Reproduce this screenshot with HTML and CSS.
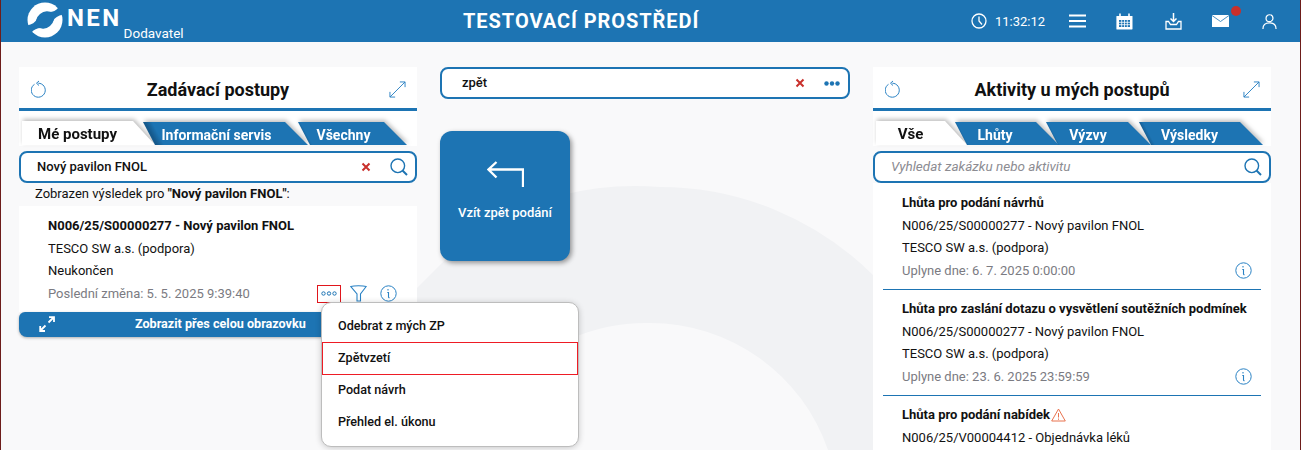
FILE: index.html
```html
<!DOCTYPE html>
<html lang="cs">
<head>
<meta charset="utf-8">
<title>NEN</title>
<link rel="stylesheet" href="styles.css">
</head>
<body>
<div class="app">
  <header class="topbar">
    <div class="brand">
      <svg class="logo" viewBox="0 0 36 36"><circle cx="18" cy="18" r="17.500" fill="#fff"/><ellipse cx="18" cy="18" rx="9.800" ry="7.800" transform="rotate(-40 18 18)" fill="#1d74b3"/><path d="M22 10 Q26.500 13 26 19 Q28.500 14 36 12.500 L31.500 5.500 Q28 10 22 10Z" fill="#1d74b3"/><path d="M22 10 Q26.500 13 26 19 Q28.500 14 36 12.500 L31.500 5.500 Q28 10 22 10Z" fill="#1d74b3" transform="rotate(180 18 18)"/></svg>
      <span class="nen">NEN</span>
      <span class="role">Dodavatel</span>
    </div>
    <h1 class="env">TESTOVACÍ PROSTŘEDÍ</h1>
    <div class="tools">
      <svg class="ico clock" viewBox="0 0 16 16"><circle cx="8" cy="8" r="7" fill="none" stroke="#fff" stroke-width="1.300"/><path d="M8 3.500V8l3 3.500" fill="none" stroke="#fff" stroke-width="1.300"/></svg>
      <span class="time">11:32:12</span>
      <svg class="ico burger" viewBox="0 0 17 14"><path d="M0 1.500h17M0 7h17M0 12.500h17" stroke="#fff" stroke-width="2.200"/></svg>
      <svg class="ico cal" viewBox="0 0 17 17"><path d="M1 3h15a.8.8 0 0 1 .5.5V16a.8.8 0 0 1-.5.6H1a.8.8 0 0 1-.6-.6V3.500A.8.8 0 0 1 1 3z" fill="#fff"/><path d="M4 0.500v3M13 0.500v3" stroke="#fff" stroke-width="1.600"/><path d="M3 7h11v7H3z" fill="#1d74b3"/><path d="M3 9.300h11M3 11.700h11M5.700 7v7M8.500 7v7M11.300 7v7" stroke="#fff" stroke-width=".8"/></svg>
      <svg class="ico dl" viewBox="0 0 17 17"><path d="M8.500 0v8M5.500 5.500l3 3 3-3" fill="none" stroke="#fff" stroke-width="1.500"/><path d="M3.500 8.500H1v7.500h15V8.500h-2.500l-2 3h-6z" fill="none" stroke="#fff" stroke-width="1.300"/></svg>
      <span class="mail"><svg class="ico env-ico" viewBox="0 0 17 12"><path d="M0 0h17v12H0z" fill="#fff"/><path d="M0 .5l8.500 6 8.500-6" fill="none" stroke="#1d74b3" stroke-width=".8"/></svg><i class="dot"></i></span>
      <svg class="ico user" viewBox="0 0 16 17"><circle cx="8" cy="5" r="3.700" fill="none" stroke="#fff" stroke-width="1.300"/><path d="M1 16.500c0-4.500 3-6.500 7-6.500s7 2 7 6.500" fill="none" stroke="#fff" stroke-width="1.300"/></svg>
    </div>
  </header>

  <main class="board">
    <svg class="swoosh" viewBox="0 0 1301 408" aria-hidden="true"><path d="M417 246 L470 193 A302 302 0 0 1 660 145 A302 302 0 0 1 873 233 V408 H828 A188 188 0 0 0 650 281 A188 188 0 0 0 570 297 L500 290 H417Z" fill="#f1f2f4"/></svg>

    <section class="panel">
      <div class="head">
        <div class="titlebar">
          <svg class="refresh" viewBox="0 0 16 18"><path d="M7.300 3.200A7 7 0 1 1 3.500 4.300" fill="none" stroke="#2a82c4" stroke-width="1"/><path d="M8 1L5.500 3.200L8 5.500" fill="none" stroke="#2a82c4" stroke-width="1"/></svg>
          <h2>Zadávací postupy</h2>
          <svg class="expand" viewBox="0 0 18 18"><path d="M1 17L17 1M11.500 1H17V6.500M1 11.500V17H6.500" fill="none" stroke="#2a82c4" stroke-width="1"/></svg>
        </div>
        <div class="tabs">
          <span class="tab active t-me">Mé postupy</span>
          <span class="tab t-info">Informační servis</span>
          <span class="tab t-all">Všechny</span>
        </div>
      </div>
      <div class="search">
        <span class="val">Nový pavilon FNOL</span>
        <svg class="x" viewBox="0 0 10 10"><path d="M1.500 1.500l7 7M8.500 1.500l-7 7" stroke="#c9302c" stroke-width="2"/></svg>
        <svg class="lens" viewBox="0 0 18 18"><circle cx="7.800" cy="7.800" r="6.800" fill="none" stroke="#1d74b3" stroke-width="1.400"/><path d="M12.500 12.500l4.500 4.500" stroke="#1d74b3" stroke-width="2"/></svg>
      </div>
      <p class="result">Zobrazen výsledek pro <b>"Nový pavilon FNOL"</b>:</p>
      <article class="card">
        <p class="b">N006/25/S00000277 - Nový pavilon FNOL</p>
        <p>TESCO SW a.s. (podpora)</p>
        <p>Neukončen</p>
        <div class="foot">
          <p class="grey">Poslední změna: 5. 5. 2025 9:39:40</p>
          <span class="more"><svg viewBox="0 0 16 5"><circle cx="2.500" cy="2.500" r="1.700" fill="none" stroke="#1d74b3"/><circle cx="8" cy="2.500" r="1.700" fill="none" stroke="#1d74b3"/><circle cx="13.500" cy="2.500" r="1.700" fill="none" stroke="#1d74b3"/></svg></span>
          <svg class="funnel" viewBox="0 0 17 17"><path d="M.8 1.500C4 .5 13 .5 16.200 1.500L10.500 9v7l-3.500 0V9z" fill="none" stroke="#2a82c4" stroke-width="1.100"/></svg>
          <svg class="info" viewBox="0 0 17 17"><circle cx="8.500" cy="8.500" r="7.700" fill="none" stroke="#2a82c4" stroke-width="1"/><path d="M8 4v1.500M7.300 7.500H8.500V12q0 .8 1 .6" fill="none" stroke="#2a82c4" stroke-width="1.100"/></svg>
        </div>
      </article>
      <button class="wide">
        <svg viewBox="0 0 16 16"><path d="M1.500 14.500L6.500 9.500M9.500 6.500L14.500 1.500M10 1.200H15V6M1.200 10V15H6" fill="none" stroke="#fff" stroke-width="1.800"/></svg>
        <span>Zobrazit přes celou obrazovku</span>
      </button>
      <ul class="menu">
        <li>Odebrat z mých ZP</li>
        <li class="hit">Zpětvzetí</li>
        <li class="after">Podat návrh</li>
        <li>Přehled el. úkonu</li>
      </ul>
    </section>

    <section class="middle">
      <div class="search mid">
        <span class="val">zpět</span>
        <svg class="x" viewBox="0 0 10 10"><path d="M1.500 1.500l7 7M8.500 1.500l-7 7" stroke="#c9302c" stroke-width="2"/></svg>
        <svg class="dots" viewBox="0 0 16 5"><circle cx="2.500" cy="2.500" r="2.200" fill="#1d74b3"/><circle cx="8" cy="2.500" r="2.200" fill="#1d74b3"/><circle cx="13.500" cy="2.500" r="2.200" fill="#1d74b3"/></svg>
      </div>
      <div class="tile">
        <svg viewBox="0 0 37 26"><path d="M36 26V8.500H1.500M9.500 1L1.500 8.500l8 8" fill="none" stroke="#fff" stroke-width="2.300"/></svg>
        <span>Vzít zpět podání</span>
      </div>
    </section>

    <section class="panel">
      <div class="head">
        <div class="titlebar">
          <svg class="refresh" viewBox="0 0 16 18"><path d="M7.300 3.200A7 7 0 1 1 3.500 4.300" fill="none" stroke="#2a82c4" stroke-width="1"/><path d="M8 1L5.500 3.200L8 5.500" fill="none" stroke="#2a82c4" stroke-width="1"/></svg>
          <h2>Aktivity u mých postupů</h2>
          <svg class="expand" viewBox="0 0 18 18"><path d="M1 17L17 1M11.500 1H17V6.500M1 11.500V17H6.500" fill="none" stroke="#2a82c4" stroke-width="1"/></svg>
        </div>
        <div class="tabs">
          <span class="tab active t-vse">Vše</span>
          <span class="tab t-lh">Lhůty</span>
          <span class="tab t-vy">Výzvy</span>
          <span class="tab t-vs">Výsledky</span>
        </div>
      </div>
      <div class="search">
        <span class="ph">Vyhledat zakázku nebo aktivitu</span>
        <svg class="lens" viewBox="0 0 18 18"><circle cx="7.800" cy="7.800" r="6.800" fill="none" stroke="#1d74b3" stroke-width="1.400"/><path d="M12.500 12.500l4.500 4.500" stroke="#1d74b3" stroke-width="2"/></svg>
      </div>
      <div class="list">
        <article class="act">
          <p class="b">Lhůta pro podání návrhů</p>
          <p>N006/25/S00000277 - Nový pavilon FNOL</p>
          <p>TESCO SW a.s. (podpora)</p>
          <div class="foot"><p class="grey">Uplyne dne: 6. 7. 2025 0:00:00</p>
            <svg class="info" viewBox="0 0 17 17"><circle cx="8.500" cy="8.500" r="7.700" fill="none" stroke="#2a82c4" stroke-width="1"/><path d="M8 4v1.500M7.300 7.500H8.500V12q0 .8 1 .6" fill="none" stroke="#2a82c4" stroke-width="1.100"/></svg></div>
        </article>
        <article class="act">
          <p class="b">Lhůta pro zaslání dotazu o vysvětlení soutěžních podmínek</p>
          <p>N006/25/S00000277 - Nový pavilon FNOL</p>
          <p>TESCO SW a.s. (podpora)</p>
          <div class="foot"><p class="grey">Uplyne dne: 23. 6. 2025 23:59:59</p>
            <svg class="info" viewBox="0 0 17 17"><circle cx="8.500" cy="8.500" r="7.700" fill="none" stroke="#2a82c4" stroke-width="1"/><path d="M8 4v1.500M7.300 7.500H8.500V12q0 .8 1 .6" fill="none" stroke="#2a82c4" stroke-width="1.100"/></svg></div>
        </article>
        <article class="act">
          <p class="b">Lhůta pro podání nabídek<svg class="warn" viewBox="0 0 15 14"><path d="M7.500 1L14.300 13H.7z" fill="none" stroke="#e8734f" stroke-width="1"/><path d="M7.500 5v4.500M7.500 10.500v1.300" stroke="#e8734f" stroke-width="1"/></svg></p>
          <p>N006/25/V00004412 - Objednávka léků</p>
        </article>
      </div>
    </section>
  </main>
</div>
</body>
</html>
```
FILE: styles.css
```css
* { box-sizing: border-box; }
html, body { margin: 0; height: 450px; overflow: hidden; }
body { font-family: Roboto, "Liberation Sans", sans-serif; font-size: 13px; color: #111; }
p, h1, h2, ul { margin: 0; padding: 0; }
.app { height: 450px; background: #f9f9fa; border-left: 1px solid #6d1d1a; border-right: 1px solid #6d1d1a; overflow: hidden; }

.topbar { height: 42px; background: #1d74b3; color: #fff; display: flex; align-items: center; padding-left: 26px; }
.brand { width: 436px; display: flex; height: 42px; position: relative; }
.logo { width: 36px; height: 36px; margin-top: 2px; }
.nen { font-size: 24px; font-weight: 700; letter-spacing: 2.4px; margin: 3px 0 0 4px; line-height: 30px; }
.role { font-size: 13.5px; margin: 24px 0 0 2px; line-height: 18px; }
.env { font-size: 20px; font-weight: 700; letter-spacing: .95px; white-space: nowrap; }
.tools { margin-left: auto; display: flex; align-items: center; }
.ico { display: block; }
.clock { width: 16px; height: 16px; margin-right: 8px; }
.time { font-size: 13px; width: 50px; margin-right: 24px; }
.burger { width: 17px; height: 14px; margin-right: 30px; }
.cal { width: 17px; height: 17px; margin-right: 32px; }
.dl { width: 17px; height: 17px; margin-right: 30px; }
.mail { position: relative; margin-right: 33px; }
.env-ico { width: 17px; height: 12px; }
.dot { position: absolute; width: 10px; height: 10px; border-radius: 50%; background: #c9302c; left: 19px; top: -9px; }
.user { width: 15px; height: 17px; margin-right: 23px; }

.board { position: relative; display: grid; grid-template-columns: 398px 410px 398px; column-gap: 23px; padding: 25px 0 0 18px; height: 408px; }
.swoosh { position: absolute; left: -1px; top: 0; width: 1301px; height: 408px; }
.panel, .middle { position: relative; min-width: 0; }

.head { background: #fff; height: 79px; }
.titlebar { height: 44px; border-bottom: 3px solid #1d74b3; display: flex; align-items: center; justify-content: space-between; padding: 3px 11px 0 12px; }
.titlebar h2 { font-size: 18px; font-weight: 700; }
.refresh { width: 16px; height: 18px; }
.expand { width: 17px; height: 17px; }

.tabs { display: flex; padding: 10px 0 0 3px; height: 35px; filter: drop-shadow(1px -2px 2px rgba(0,0,0,.25)); }
.tab { display: flex; align-items: center; justify-content: center; height: 23px; margin-top: 1px; margin-left: -10px; padding: 2px 18px 0 0; background: linear-gradient(62deg, #15598c 0 8%, #1d74b3 12%); color: #fff; font-size: 14px; font-weight: 700; clip-path: polygon(0 0, calc(100% - 23px) 0, 100% 100%, 12px 100%); }
.tab.active { margin-left: 0; margin-top: 0; height: 24px; background: #fff; color: #111; font-size: 15px; font-weight: 700; padding: 2px 22px 0 0; clip-path: polygon(0 0, calc(100% - 22px) 0, 100% 100%, 0 100%); position: relative; }
.t-me { width: 133px; }
.t-info { width: 165px; margin-left: -12px !important; }
.t-all { width: 109px; }
.t-vse { width: 91px; }
.t-lh { width: 104px; margin-left: -12px !important; padding-right: 24px; }
.t-vy { width: 105px; margin-left: -13px !important; padding-right: 21px; }
.t-vs { width: 124px; margin-left: -12px !important; padding-right: 23px; }

.search { height: 32px; margin-top: 5px; background: #fff; border: 2.5px solid #1d74b3; border-radius: 8px; display: flex; align-items: center; padding: 0 7px 0 16px; }
.val { font-size: 13px; font-weight: 500; flex: 1; padding-bottom: 2px; }
.ph { font-size: 13.5px; font-style: italic; color: #8c8c92; flex: 1; padding-bottom: 2px; }
.x { width: 10px; height: 10px; margin-right: 19px; }
.lens { width: 18px; height: 18px; }
.mid { margin-top: 0; padding: 0 8px 0 20px; }
.dots { width: 16px; height: 5px; }

.result { font-size: 13px; padding: 2px 0 0 16px; height: 23px; line-height: 18px; }
.card { background: #fff; height: 106px; padding: 9px 0 0 29px; }
.card p, .act p { line-height: 22.5px; }
.b { font-weight: 700; }
.grey { color: #7b7b82; }
.foot { display: flex; align-items: center; height: 22.5px; }
.foot .grey { flex: 1; }
.more { width: 24px; height: 18px; border: 1.5px solid #e0161c; display: flex; align-items: center; justify-content: center; margin-right: 9px; }
.more svg { width: 16px; height: 5px; }
.funnel { width: 17px; height: 17px; margin-right: 13px; }
.info { width: 17px; height: 17px; }
.card .info { margin-right: 20px; }

.wide { width: 100%; height: 25px; border: 0; background: #1d74b3; color: #fff; border-radius: 6px 6px 8px 8px; display: flex; align-items: center; font: 700 12.6px Roboto, sans-serif; padding: 0 0 2px 20px; box-shadow: 0 1px 3px rgba(0,0,0,.3); }
.wide svg { width: 16px; height: 16px; margin-right: 80px; }

.menu { position: absolute; left: 302px; top: 235px; width: 258px; height: 145px; background: #fff; border: 1px solid #bdbdbd; border-radius: 10px; box-shadow: 0 1px 6px rgba(0,0,0,.2); list-style: none; padding-top: 7px; z-index: 3; }
.menu li { height: 32px; line-height: 32px; padding-left: 16px; font-size: 12.6px; font-weight: 500; }
.menu .hit { height: 33px; line-height: 31px; outline: 1px solid #ee1c25; outline-offset: -1px; }
.menu .after { margin-top: -1px; }

.tile { margin-top: 32px; width: 130px; height: 130px; background: #1d74b3; border-radius: 12px; box-shadow: 2px 2px 5px rgba(0,0,0,.4); color: #fff; display: flex; flex-direction: column; align-items: center; padding-top: 30px; font-size: 13px; font-weight: 500; }
.tile svg { width: 37px; height: 26px; margin-bottom: 18px; flex: none; }

.list { background: #fff; margin-top: 0; padding: 1px 10px 0; height: 267px; }
.act { padding: 0 0 0 19px; border-bottom: 1px solid #1d74b3; height: 106px; padding-top: 8px; }
.act:last-child { border: 0; }
.act .foot { padding-right: 9px; }
.act .b { display: flex; align-items: center; }
.warn { width: 15px; height: 14px; margin-left: 1px; }
```
